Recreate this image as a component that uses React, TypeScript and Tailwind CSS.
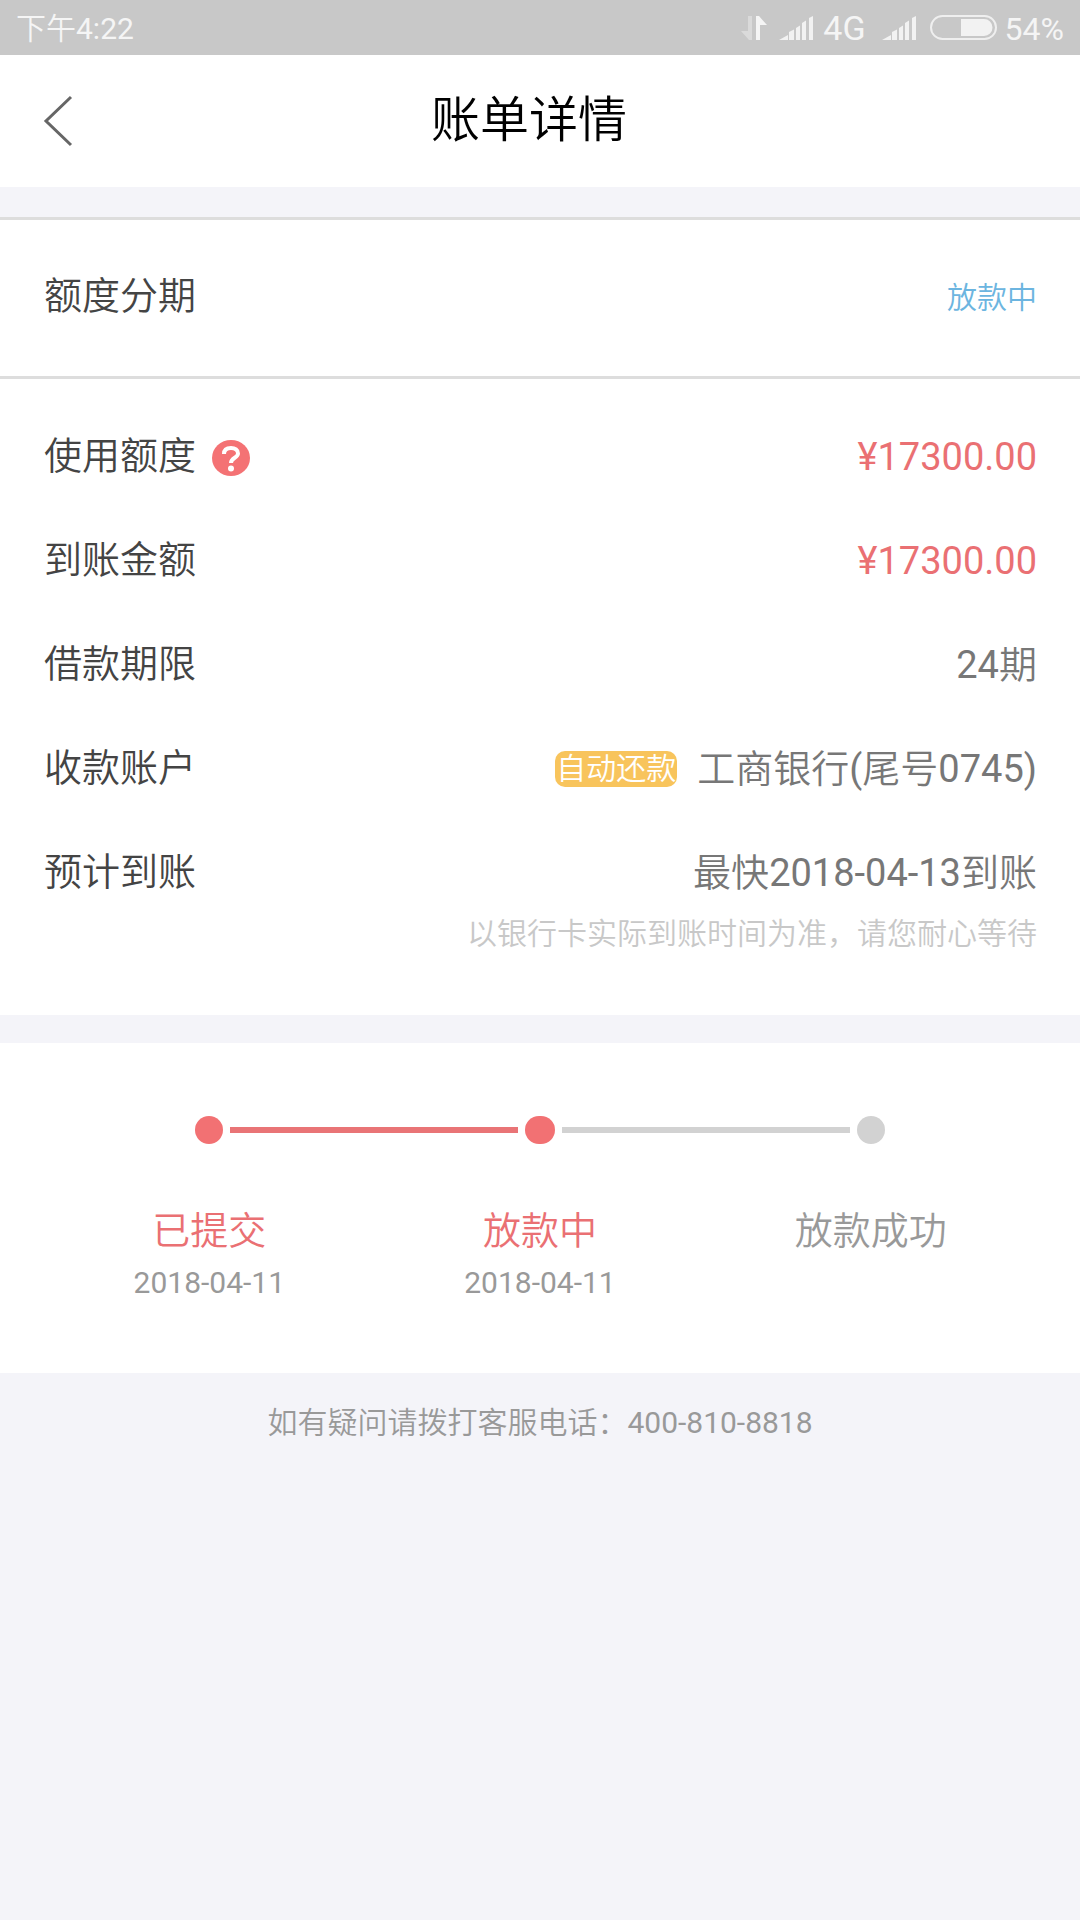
import type { ReactNode } from "react"

const Signal = () => {
    return (
        <svg width="34" height="24" viewBox="0 0 34 24" fill="#f2f2f2">
            <path d="M0 24L9 19V24Z" />
            <path d="M10 16L15 13.500V24H10Z" />
            <path d="M17 12L21 9.500V24H17Z" />
            <path d="M23 7L27 4.500V24H23Z" />
            <path d="M30 2L34 0V24H30Z" />
        </svg>
    )
}

const StatusBar = () => {
    return (
        <div className="flex h-[55px] items-center justify-between bg-[#c8c8c8] pl-4 pr-4 text-[32px] font-normal text-[#f5f5f5]">
            <span className="pt-0.5 text-[30px]"><span className="font-[350]">下午</span>4:22</span>
            <div className="flex items-center">
                <svg className="mr-3" width="26" height="24" viewBox="0 0 26 24">
                    <path d="M7 0H11V24H8L0 15H7Z" fill="#dadada" />
                    <path d="M15 0H18L26 9H19V24H15Z" fill="#f5f5f5" />
                </svg>
                <Signal />
                <span className="ml-2.5 pt-0.5 text-[34px]">4G</span>
                <span className="ml-4"><Signal /></span>
                <svg className="ml-3.5" width="67" height="25" viewBox="0 0 67 25">
                    <rect x="1" y="1" width="65" height="23" rx="11.500" fill="none" stroke="#efefef" strokeWidth="2" />
                    <path d="M31 4H54A8.500 8.500 0 0 1 54 21H31Z" fill="#f2f2f2" />
                </svg>
                <span className="ml-2 pt-0.5">54%</span>
            </div>
        </div>
    )
}

const Num = ({ children }: { children: ReactNode }) => {
    return <span className="font-normal">{children}</span>
}

const Row = ({ label, help, children }: { label: string; help?: boolean; children: ReactNode }) => {
    return (
        <div className="flex items-center justify-between">
            <dt className="flex items-center text-[#444444]">
                {label}
                {help && (
                    <button type="button" aria-label="说明" className="ml-4 pt-1">
                        <svg width="38" height="36" viewBox="0 0 38 36">
                            <ellipse cx="19" cy="18" rx="19" ry="18" fill="#f47274" />
                            <path d="M12 14C12 9.500 15 8 19 8C23 8 26 10 26 13.500C26 18 19 17.500 19 23" fill="none" stroke="#fff" strokeWidth="4" />
                            <circle cx="19" cy="28.500" r="3" fill="#fff" />
                        </svg>
                    </button>
                )}
            </dt>
            <dd className="flex items-center pt-0.5 text-[#777777]">{children}</dd>
        </div>
    )
}

const steps = [
    { name: "已提交", date: "2018-04-11", done: true },
    { name: "放款中", date: "2018-04-11", done: true },
    { name: "放款成功", date: "", done: false },
]

const App = () => {
    return (
        <div className="min-h-screen bg-[#f4f4f9] font-['Roboto','Noto_Sans_CJK_SC',sans-serif] font-[350]">
            <StatusBar />
            <header className="flex h-[132px] items-center bg-white">
                <button type="button" aria-label="返回" className="flex w-[86px] justify-end pr-3">
                    <svg width="32" height="52" viewBox="0 0 32 52">
                        <path d="M29 2L4 26L29 50" fill="none" stroke="#666" strokeWidth="3" />
                    </svg>
                </button>
                <h1 className="flex-1 text-center text-[49px] leading-[64px] font-[350] text-black">账单详情</h1>
                <div className="w-[108px]"></div>
            </header>

            <section className="mt-[30px] bg-white text-[38px] leading-[56px]">
                <div className="flex items-center justify-between border-y-[3px] border-[#dddddd] pl-11 pr-[43px] pt-[46px] pb-[50px]">
                    <h2 className="font-[350] text-[#444444]">额度分期</h2>
                    <p className="pt-1 text-[30px] text-[#6cb5e0]">放款中</p>
                </div>
                <dl className="flex flex-col gap-[46px] pl-11 pr-[43px] pt-12">
                    <Row label="使用额度" help>
                        <span className="font-normal text-[#ea7073]">¥17300.00</span>
                    </Row>
                    <Row label="到账金额">
                        <span className="font-normal text-[#ea7073]">¥17300.00</span>
                    </Row>
                    <Row label="借款期限"><Num>24</Num>期</Row>
                    <Row label="收款账户">
                        <span className="mr-5 rounded-[10px] bg-[#f8c45c] px-px text-[30px] leading-9 text-white">自动还款</span>
                        工商银行<Num>(</Num>尾号<Num>0745)</Num>
                    </Row>
                    <Row label="预计到账">最快<Num>2018-04-13</Num>到账</Row>
                </dl>
                <p className="pl-11 pr-[43px] pt-2 pb-[56px] text-right text-[30px] leading-[50px] text-[#c8c8c8]">以银行卡实际到账时间为准，请您耐心等待</p>
            </section>

            <section className="mt-7 bg-white px-11 pt-[73px] pb-[66px]">
                <div className="mx-[calc(100%/6-14px)] flex items-center gap-[7px]">
                    <div className="size-7 rounded-full bg-[#f27173]"></div>
                    <div className="h-1.5 flex-1 bg-[#e97476]"></div>
                    <div className="h-7 w-[30px] rounded-full bg-[#f27173]"></div>
                    <div className="h-1.5 flex-1 bg-[#d2d2d2]"></div>
                    <div className="size-7 rounded-full bg-[#d2d2d2]"></div>
                </div>
                <ol className="mt-[59px] grid grid-cols-3 text-center">
                    {steps.map((step) => (
                        <li key={step.name}>
                            <p className={step.done ? "text-[38px] leading-[56px] text-[#ea7073]" : "text-[38px] leading-[56px] text-[#999999]"}>{step.name}</p>
                            <p className="text-[30px] leading-[48px] font-normal text-[#999999]">{step.date}</p>
                        </li>
                    ))}
                </ol>
            </section>

            <footer className="pt-[25px] text-center text-[30px] leading-[50px] text-[#999999]">
                如有疑问请拨打客服电话：<a href="tel:400-810-8818" className="font-normal">400-810-8818</a>
            </footer>
        </div>
    )
}

export default App
